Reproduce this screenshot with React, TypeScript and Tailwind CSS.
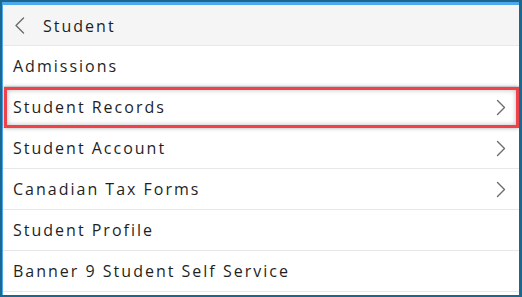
const items = [
  { label: "Admissions", arrow: false },
  { label: "Student Records", arrow: true, highlight: true },
  { label: "Student Account", arrow: true },
  { label: "Canadian Tax Forms", arrow: true },
  { label: "Student Profile", arrow: false },
  { label: "Banner 9 Student Self Service", arrow: false },
];

function Chevron({ left = false }: { left?: boolean }) {
  return (
    <svg width="11" height="17" viewBox="0 0 11 17" fill="none" className="shrink-0">
      <path
        d={left ? "M9.5 1 L2 8.5 L9.5 16" : "M1.5 1.5 L8.5 8.5 L1.5 15.5"}
        stroke="#6b6b6b"
        strokeWidth="1.4"
        strokeLinecap="round"
        strokeLinejoin="round"
      />
    </svg>
  );
}

export default function App() {
  return (
    <div className="w-[522px] h-[297px] bg-white border-t-2 border-l-2 border-b-2 border-r-[3px] border-[#1b6790] overflow-hidden">
      <div
        className="h-full border-t-[3px] border-l border-[#4ea8ee] text-[#1f1f1f] text-[16px] tracking-[2px]"
        style={{ fontFamily: '"Open Sans", sans-serif' }}
      >
        <div className="h-[41px] flex items-center bg-[#f5f5f5] border-b border-[#e8e8e8] pl-[11px]">
          <Chevron left />
          <span className="ml-[18px] pt-[1px]">Student</span>
        </div>
        {items.map((item) => (
          <div
            key={item.label}
            className="relative h-[41px] flex items-center justify-between pl-[10px] pr-[12px] border-b border-[#e8e8e8]"
          >
            <span>{item.label}</span>
            {item.arrow && <Chevron />}
            {item.highlight && (
              <div className="absolute left-[1px] right-[0px] top-[0px] bottom-[-1px] border-[3px] border-[#ef4149] shadow-[inset_0_0_5px_rgba(0,0,0,0.28),0_0_4px_rgba(0,0,0,0.35)]" />
            )}
          </div>
        ))}
      </div>
    </div>
  );
}
